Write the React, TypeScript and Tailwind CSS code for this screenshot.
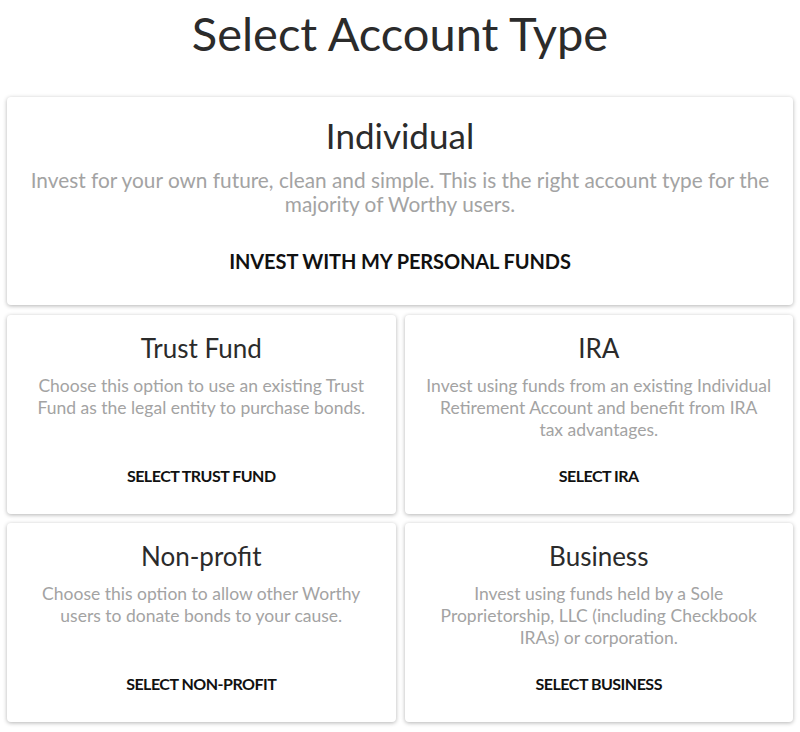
import React from "react";

const font = { fontFamily: "Lato, 'Open Sans', sans-serif" };

function SmallCard({ title, desc, action }: { title: string; desc: string; action: string }) {
  return (
    <div className="flex h-[199px] flex-col items-center rounded bg-white px-[20px] pt-[17px] pb-[28px] text-center shadow-[0_1px_4px_rgba(0,0,0,0.3)]">
      <h2 className="text-[26px] leading-[32px] text-[#2b2b2b]">{title}</h2>
      <p className="mt-[11px] text-[17.5px] leading-[22px] text-[#a3a3a3]">{desc}</p>
      <div className="mt-auto text-[16px] font-bold leading-[20px] tracking-[-0.5px] text-[#111]">{action}</div>
    </div>
  );
}

export default function App() {
  return (
    <div className="min-h-[732px] bg-white px-[7px]" style={font}>
      <h1 className="pt-[5px] text-center text-[47px] leading-[56px] text-[#2b2b2b]">Select Account Type</h1>
      <div className="mt-[36px] flex h-[208px] flex-col items-center rounded bg-white px-5 pt-[17px] text-center shadow-[0_1px_4px_rgba(0,0,0,0.3)]">
        <h2 className="text-[35px] leading-[42px] text-[#2b2b2b]">Individual</h2>
        <p className="mt-[12px] text-[20.8px] leading-[24px] text-[#a3a3a3]">
          Invest for your own future, clean and simple. This is the right account type for the majority of Worthy users.
        </p>
        <div className="mt-[33px] text-[20px] font-bold leading-[24px] tracking-[-0.1px] text-[#111]">INVEST WITH MY PERSONAL FUNDS</div>
      </div>
      <div className="mt-[10px] grid grid-cols-2 gap-x-[9px] gap-y-[9px] pb-[10px]">
        <SmallCard
          title="Trust Fund"
          desc="Choose this option to use an existing Trust Fund as the legal entity to purchase bonds."
          action="SELECT TRUST FUND"
        />
        <SmallCard
          title="IRA"
          desc={"Invest using funds from an existing Individual Retirement Account and benefit from IRA tax\u00a0advantages."}
          action="SELECT IRA"
        />
        <SmallCard
          title="Non-profit"
          desc="Choose this option to allow other Worthy users to donate bonds to your cause."
          action="SELECT NON-PROFIT"
        />
        <SmallCard
          title="Business"
          desc="Invest using funds held by a Sole Proprietorship, LLC (including Checkbook IRAs) or corporation."
          action="SELECT BUSINESS"
        />
      </div>
    </div>
  );
}
